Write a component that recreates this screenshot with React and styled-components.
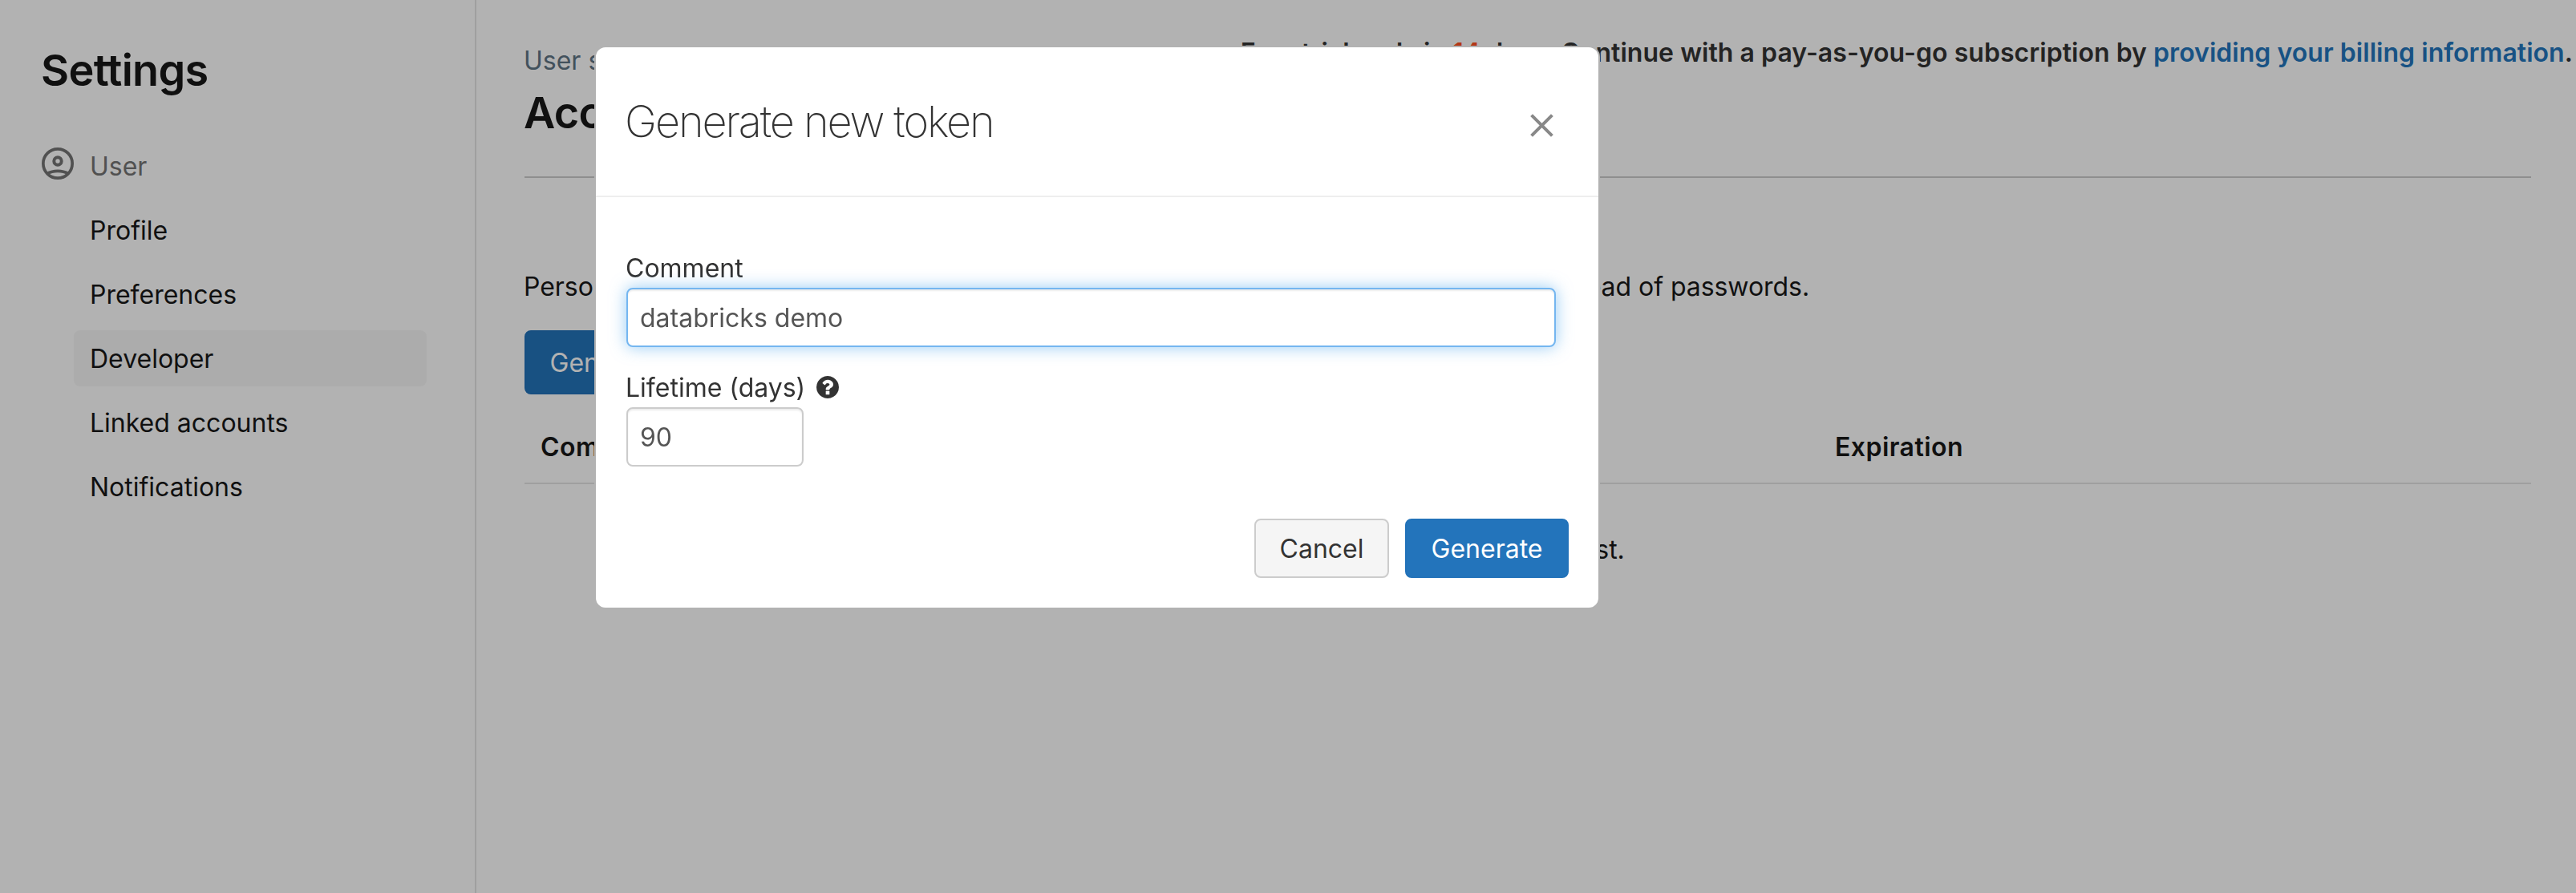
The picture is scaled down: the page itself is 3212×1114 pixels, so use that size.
import React from "react";
import styled, { createGlobalStyle } from "styled-components";

const GlobalStyle = createGlobalStyle`
  * {
    box-sizing: border-box;
  }
  body {
    margin: 0;
    background: #ffffff;
    overflow: hidden;
    font-family: Inter, "Liberation Sans", sans-serif;
    font-size: 32px;
    line-height: 40px;
    color: #181818;
  }
`;

const Page = styled.div`
  display: flex;
  height: 100vh;
  min-height: 1114px;
`;

const Sidebar = styled.aside`
  flex: none;
  width: 594px;
  padding-top: 60px;
  border-right: 2px solid #e4e4e4;
`;

const Heading = styled.h1`
  margin: 0;
  font-size: 54px;
  line-height: 56px;
  font-weight: 600;
  letter-spacing: -0.7px;
`;

const SidebarTitle = styled(Heading)`
  padding-left: 51px;
`;

const NavGroup = styled.nav`
  display: flex;
  flex-direction: column;
  gap: 10px;
  margin-top: 56px;
`;

const NavLabel = styled.div`
  display: flex;
  align-items: center;
  gap: 20px;
  height: 70px;
  padding: 2px 0 0 52px;
  color: #757575;

  svg {
    margin-bottom: 8px;
  }
`;

const NavItem = styled.a`
  display: flex;
  align-items: center;
  width: 440px;
  height: 70px;
  margin-left: 92px;
  padding: 2px 0 0 20px;
  border-radius: 8px;
  background: ${(p) => (p.$active ? "#f7f7f7" : "transparent")};
`;

const Main = styled.main`
  flex: 1;
  min-width: 0;
  padding: 46px 4px 0 60px;
`;

const TopBar = styled.div`
  display: flex;
  justify-content: space-between;
  align-items: flex-start;
`;

const Breadcrumb = styled.a`
  margin-top: 10px;
  margin-left: -1px;
  color: #5f7485;
`;

const TrialBanner = styled.div`
  font-weight: 600;
  letter-spacing: 0.04px;
  white-space: nowrap;
  color: #333333;
`;

const DaysLeft = styled.span`
  color: #ff5022;
`;

const BillingLink = styled.a`
  color: #2376bd;
`;

const Content = styled.section`
  width: 2502px;
`;

const PageTitle = styled(Heading)`
  margin-top: 17px;
  margin-left: -1px;
`;

const Divider = styled.div`
  height: 2px;
  margin-top: 51px;
  background: #cccccc;
`;

const Intro = styled.p`
  margin: 116px 0 34px -1px;
  letter-spacing: -0.045px;
`;

const Button = styled.button`
  display: inline-flex;
  align-items: center;
  justify-content: center;
  width: ${(p) => p.$width}px;
  height: ${(p) => p.$height || 74}px;
  padding: 2px 0 0;
  border: 2px solid ${(p) => (p.$primary ? "#2272b9" : "#cccccc")};
  border-radius: 8px;
  background: ${(p) => (p.$primary ? "#2374bb" : "#f5f5f5")};
  color: ${(p) => (p.$primary ? "#ffffff" : "#333333")};
  font: inherit;
`;

const TableHead = styled.div`
  display: grid;
  grid-template-columns: 807px 807px 1fr;
  padding: 46px 0 24px 20px;
  border-bottom: 2px solid #e4e4e4;
  font-weight: 600;
  letter-spacing: 0.45px;
`;

const EmptyRow = styled.div`
  margin-top: 62px;
  text-align: center;
`;

const Backdrop = styled.div`
  position: fixed;
  inset: 0;
  display: flex;
  align-items: flex-start;
  padding: 57px 0 0 741px;
  background: rgba(0, 0, 0, 0.3);
`;

const Modal = styled.div`
  display: flex;
  flex-direction: column;
  width: 1254px;
  height: 703px;
  border: 2px solid #b2b2b2;
  border-radius: 14px;
  background: #ffffff;
  color: #333333;
`;

const ModalHeader = styled.header`
  display: flex;
  align-items: center;
  justify-content: space-between;
  height: 187px;
  padding: 0 56px 0 36px;
  border-bottom: 2px solid #eeeeee;
`;

const ModalTitle = styled.h2`
  margin: 1px 0 0;
  font-size: 54px;
  line-height: 60px;
  font-weight: 200;
  letter-spacing: -2.1px;
`;

const CloseButton = styled.button`
  display: flex;
  margin: 10px 0 0;
  padding: 0;
  border: 0;
  background: none;
`;

const ModalBody = styled.div`
  flex: 1;
  display: flex;
  flex-direction: column;
  gap: 31px;
  padding: 69px 53px 0 38px;
`;

const Field = styled.div`
  display: flex;
  flex-direction: column;
  gap: 4px;
`;

const Label = styled.label`
  display: flex;
  align-items: center;
  gap: 14px;
  margin-left: -1px;

  svg {
    margin-bottom: 2px;
  }
`;

const Input = styled.input`
  width: ${(p) => p.$width};
  height: 74px;
  padding: 0 15px;
  border: 2px solid ${(p) => (p.$focused ? "#74b6f0" : "#cccccc")};
  border-radius: 8px;
  outline: 0;
  background: #ffffff;
  color: #555555;
  font: inherit;
  box-shadow: inset 0 2px 2px rgba(0, 0, 0, 0.075)
    ${(p) => (p.$focused ? ", 0 0 20px rgba(82, 168, 236, 0.6)" : "")};
`;

const ModalFooter = styled.footer`
  display: flex;
  justify-content: flex-end;
  gap: 20px;
  padding: 0 37px 37px;
`;

const UserCircleIcon = () => (
  <svg width="40" height="40" viewBox="0 0 40 40" fill="none" stroke="currentColor" strokeWidth="3.7">
    <circle cx="20" cy="20" r="18.15" />
    <circle cx="20" cy="17" r="4.7" strokeWidth="4" />
    <path d="M6.5 32.6Q12.5 29.3 20 29.3T33.5 32.6" />
  </svg>
);

const CloseIcon = () => (
  <svg width="29" height="29" viewBox="0 0 29 29" stroke="#888888" strokeWidth="4">
    <path d="M1.6 1.6L27.4 27.4M27.4 1.6L1.6 27.4" />
  </svg>
);

const HelpIcon = () => (
  <svg width="28" height="28" viewBox="0 128 1536 1536" fill="#333333">
    <path d="M896 1376v-192q0-14-9-23t-23-9h-192q-14 0-23 9t-9 23v192q0 14 9 23t23 9h192q14 0 23-9t9-23zm256-672q0-88-55.5-163t-138.5-116-170-41q-243 0-371 213-15 24 8 42l132 100q7 6 19 6 16 0 25-12 53-68 86-92 34-24 86-24 48 0 85.5 26t37.5 59q0 38-20 61t-68 45q-63 28-115.5 86.5t-52.5 125.5v36q0 14 9 23t23 9h192q14 0 23-9t9-23q0-19 21.5-49.5t54.5-49.5q32-18 49-28.5t46-35 44.5-48 28-60.5 12.5-81zm384 192q0 209-103 385.5t-279.5 279.5-385.5 103-385.5-103-279.5-279.5-103-385.5 103-385.5 279.5-279.5 385.5-103 385.5 103 279.5 279.5 103 385.5z" />
  </svg>
);

const NAV_ITEMS = ["Profile", "Preferences", "Developer", "Linked accounts", "Notifications"];

export default function App() {
  return (
    <>
      <GlobalStyle />
      <Page>
        <Sidebar>
          <SidebarTitle>Settings</SidebarTitle>
          <NavGroup>
            <NavLabel>
              <UserCircleIcon />
              User
            </NavLabel>
            {NAV_ITEMS.map((item) => (
              <NavItem key={item} $active={item === "Developer"}>
                {item}
              </NavItem>
            ))}
          </NavGroup>
        </Sidebar>
        <Main>
          <TopBar>
            <Breadcrumb>User settings</Breadcrumb>
            <TrialBanner>
              Free trial ends in <DaysLeft>14</DaysLeft> days. Continue with a pay-as-you-go subscription by{" "}
              <BillingLink>providing your billing information</BillingLink>.
            </TrialBanner>
          </TopBar>
          <Content>
            <PageTitle>Access tokens</PageTitle>
            <Divider />
            <Intro>
              Personal access tokens can be used for secure authentication to the Databricks API instead of passwords.
            </Intro>
            <Button $primary $width={367} $height={80}>
              Generate new token
            </Button>
            <TableHead>
              <span>Comment</span>
              <span>Creation</span>
              <span>Expiration</span>
            </TableHead>
            <EmptyRow>No tokens exist.</EmptyRow>
          </Content>
        </Main>
      </Page>
      <Backdrop>
        <Modal role="dialog">
          <ModalHeader>
            <ModalTitle>Generate new token</ModalTitle>
            <CloseButton aria-label="Close">
              <CloseIcon />
            </CloseButton>
          </ModalHeader>
          <ModalBody>
            <Field>
              <Label>Comment</Label>
              <Input $width="100%" $focused defaultValue="databricks demo" />
            </Field>
            <Field>
              <Label>
                Lifetime (days)
                <HelpIcon />
              </Label>
              <Input $width="221px" defaultValue="90" />
            </Field>
          </ModalBody>
          <ModalFooter>
            <Button $width={168}>Cancel</Button>
            <Button $primary $width={204}>
              Generate
            </Button>
          </ModalFooter>
        </Modal>
      </Backdrop>
    </>
  );
}
